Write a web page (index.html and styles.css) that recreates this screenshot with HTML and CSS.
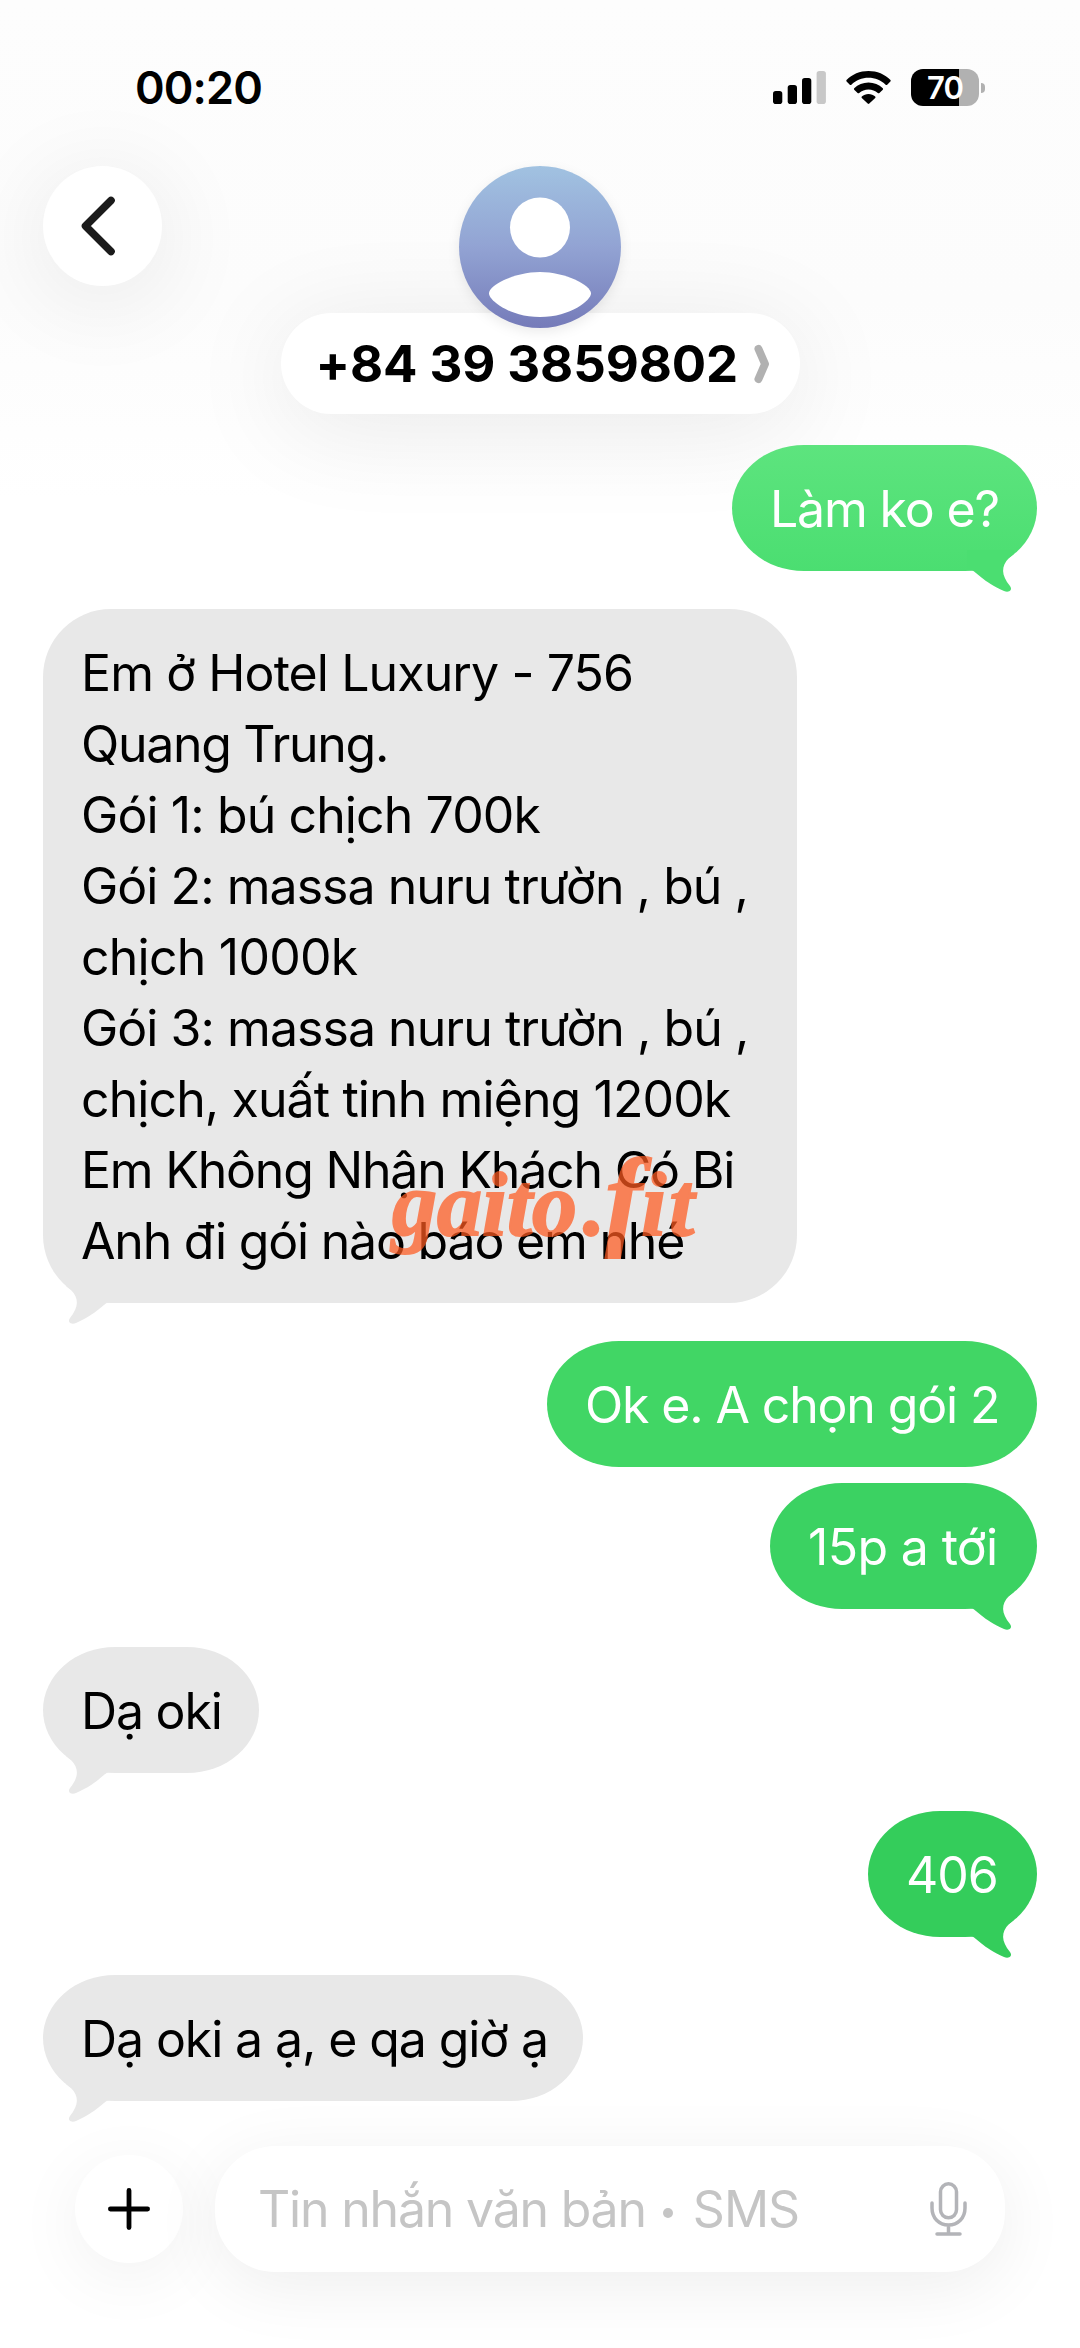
FILE: index.html
```html
<!DOCTYPE html>
<html lang="vi">
<head>
<meta charset="utf-8">
<title>Tin nhắn</title>
<link rel="stylesheet" href="styles.css">
</head>
<body>
<svg class="defs" width="0" height="0" aria-hidden="true">
  <symbol id="tail" viewBox="0 0 48 44"><path fill="currentColor" d="M0 0V20H4C9 21 16 32 37 41C42 43 46 40 43 36C34 25 34 16 42 8L47 4V0Z"/></symbol>
</svg>
<div class="phone">
  <header class="top">
    <div class="status">
      <span class="time">00:20</span>
      <div class="indicators">
        <svg width="53" height="33" viewBox="0 0 53 33"><rect x="0" y="20" width="9.3" height="13" rx="2.8"/><rect x="14.7" y="14" width="9.3" height="19" rx="2.8"/><rect x="29" y="7" width="9.3" height="26" rx="2.8"/><rect x="43.6" y="0" width="9.3" height="33" rx="2.8" fill="#c8c8c8"/></svg>
        <svg width="45" height="33" viewBox="0 0 45 33"><path d="M22.5 0C31 0 39 3.300 44.500 9Q45 9.800 44.400 10.500L41.200 13.800Q40.400 14.300 39.600 13.700C35 9.300 29 6.800 22.500 6.800S10 9.300 5.400 13.700Q4.600 14.300 3.800 13.800L.6 10.500Q0 9.800.5 9C6 3.300 14 0 22.500 0Z"/><path d="M22.500 11.600C28 11.600 33 13.700 36.800 17.200Q37.400 18 36.800 18.700L33.400 22Q32.600 22.600 31.800 22C29.300 19.700 26 18.400 22.500 18.400S15.700 19.700 13.200 22Q12.400 22.600 11.600 22L8.200 18.700Q7.600 18 8.200 17.200C12 13.700 17 11.600 22.500 11.600Z"/><path d="M22.500 22.900C25.100 22.900 27.400 23.800 29.200 25.400Q29.800 26.200 29.200 26.900L23.300 32.600Q22.500 33.200 21.700 32.600L15.800 26.900Q15.200 26.200 15.800 25.400C17.600 23.800 19.900 22.900 22.500 22.900Z"/></svg>
        <div class="battery"><span class="level">70</span><i class="nub"></i></div>
      </div>
    </div>
    <div class="nav">
      <div class="back"><svg width="36" height="60" viewBox="0 0 36 60"><path d="M31 4.500L5.500 30L31 55.500" fill="none" stroke="#1b1b1b" stroke-width="7.600" stroke-linecap="round" stroke-linejoin="round"/></svg></div>
      <div class="contact">
        <svg class="avatar" width="162" height="162" viewBox="0 0 162 162"><defs><linearGradient id="av" x1="0" y1="0" x2="0" y2="1"><stop offset="0" stop-color="#a1c2e1"/><stop offset=".5" stop-color="#92a3d3"/><stop offset="1" stop-color="#757bb9"/></linearGradient></defs><circle cx="81" cy="81" r="81" fill="url(#av)"/><circle cx="81" cy="61.500" r="30" fill="#fff"/><path d="M81 106C106 106 132 119 132 127.500C132 134 112 151 81 151S30 134 30 127.500C30 119 56 106 81 106Z" fill="#fff"/></svg>
        <div class="pill"><span class="number">+84 39 3859802</span><svg width="16" height="40" viewBox="0 0 16 40"><path d="M4.500 5L11 20L4.500 35" fill="none" stroke="#b1b1b1" stroke-width="8" stroke-linecap="round" stroke-linejoin="round"/></svg></div>
      </div>
    </div>
  </header>
  <main class="thread">
    <div class="msg out first"><p>Làm ko e?</p><svg class="tail"><use href="#tail"/></svg></div>
    <div class="msg in long">
      <p class="l1">Em ở Hotel Luxury - 756</p>
      <p class="l2">Quang Trung.</p>
      <p class="l3">Gói 1: bú chịch 700k</p>
      <p class="l4">Gói 2: massa nuru trườn , bú ,</p>
      <p class="l5">chịch 1000k</p>
      <p class="l6">Gói 3: massa nuru trườn , bú ,</p>
      <p class="l7">chịch, xuất tinh miệng 1200k</p>
      <p class="l8">Em Không Nhận Khách Có Bi</p>
      <p class="l9">Anh đi gói nào báo em nhé</p>
      <svg class="tail"><use href="#tail"/></svg>
      <div class="watermark"><span>gaito</span><span class="dot">.</span><span class="fit"><span class="f">f</span>it</span></div>
    </div>
    <div class="msg out second"><p>Ok e. A chọn gói 2</p></div>
    <div class="msg out third"><p>15p a tới</p><svg class="tail"><use href="#tail"/></svg></div>
    <div class="msg in short"><p>Dạ oki</p><svg class="tail"><use href="#tail"/></svg></div>
    <div class="msg out room"><p>406</p><svg class="tail"><use href="#tail"/></svg></div>
    <div class="msg in last"><p>Dạ oki a ạ, e qa giờ ạ</p><svg class="tail"><use href="#tail"/></svg></div>
  </main>
  <footer class="composer">
    <div class="plus"><svg width="42" height="42" viewBox="0 0 42 42"><path d="M21 2.400V39.600M2.400 21H39.600" stroke="#000" stroke-width="4.800" stroke-linecap="round"/></svg></div>
    <div class="field"><span class="hint">Tin nhắn văn bản</span><i class="bullet"></i><span class="hint sms">SMS</span>
      <svg class="mic" width="37" height="54" viewBox="0 0 37 54" fill="none" stroke="#b3b4b8" stroke-width="3.500" stroke-linecap="round"><rect x="10.500" y="1.800" width="16" height="34" rx="8"/><path d="M2 21V26C2 36 9 43 18.500 43S35 36 35 26V21M18.500 43V52M7 52H30"/></svg></div>
  </footer>
</div>
</body>
</html>
```
FILE: styles.css
```css
* { box-sizing: border-box; margin: 0; }
body { background: #fff; font-family: Inter, "Liberation Sans", sans-serif; color: #000; }
.defs { position: absolute; }
.phone { width: 1080px; height: 2348px; overflow: hidden; display: flex; flex-direction: column; background: linear-gradient(#fdfdfd 0, #fcfcfc 300px, #fff 500px); }

/* Status bar and contact header */
.top { flex: none; height: 445px; }
.status { height: 166px; padding: 60px 101px 0 135px; display: flex; justify-content: space-between; align-items: flex-start; }
.time { font-size: 45px; font-weight: 600; line-height: 56px; letter-spacing: -.9px; }
.indicators { display: flex; align-items: center; gap: 20px; height: 55px; }
.battery { position: relative; width: 68px; height: 37px; border-radius: 12px; background: linear-gradient(90deg, #000 0 48px, #b1b1b1 48px); display: flex; align-items: center; justify-content: center; }
.level { color: #fff; font-size: 31px; font-weight: 600; letter-spacing: -1px; line-height: 37px; }
.nub { position: absolute; left: 70px; top: 14px; width: 4px; height: 10px; border-radius: 0 4px 4px 0; background: #b1b1b1; }
.nav { display: grid; grid-template-columns: 120px 1fr 120px; padding: 0 43px; }
.back { width: 119px; height: 120px; border-radius: 50%; background: #fff; display: flex; align-items: center; justify-content: center; padding-right: 9px; box-shadow: 0 12px 90px 10px rgba(0,0,0,.065); }
.contact { display: flex; flex-direction: column; align-items: center; }
.avatar { position: relative; z-index: 1; filter: drop-shadow(0 4px 6px rgba(0,0,0,.08)); }
.pill { width: 519px; height: 101px; margin-top: -15px; border-radius: 51px; background: #fff; display: flex; align-items: center; padding-left: 35px; box-shadow: 0 14px 100px 5px rgba(0,0,0,.08); }
.number { width: 438px; font-size: 51px; font-weight: 700; line-height: 100px; letter-spacing: -.1px; white-space: nowrap; }

/* Conversation */
.thread { flex: none; height: 1701px; display: flex; flex-direction: column; align-items: flex-start; padding: 0 43px; }
.msg { position: relative; flex: none; min-height: 126px; padding: 29px 38px 26px; margin-bottom: 38px; border-radius: 72px / 63px; font-size: 50px; line-height: 71px; letter-spacing: -.9px; }
.msg p { white-space: nowrap; }
.in { background: #e8e8e8; color: #000; }
.out { align-self: flex-end; color: #fff; }
.tail { position: absolute; right: 22px; bottom: -23px; width: 48px; height: 44px; color: #e8e8e8; }
.in .tail { right: auto; left: 22px; transform: scaleX(-1); }
.first { width: 305px; background: linear-gradient(#5de47e, #4bde71); letter-spacing: -1.15px; }
.first .tail { color: #4bde71; }
.long { width: 754px; border-radius: 68px; padding: 28.500px 38px 26px; }
.l2 { letter-spacing: -1.3px; }
.l4, .l6 { letter-spacing: -.96px; }
.l5 { letter-spacing: -.77px; }
.l8, .l9 { letter-spacing: -1.2px; }
.second { width: 490px; margin-bottom: 16px; background: #41d665; letter-spacing: -1.15px; }
.third { width: 267px; background: #3bd262; letter-spacing: -.65px; }
.third .tail { color: #3bd262; }
.short { width: 216px; letter-spacing: -1.2px; }
.room { width: 169px; background: #34cd5b; letter-spacing: -1px; }
.room .tail { color: #34cd5b; }
.last { width: 540px; margin-bottom: 0; letter-spacing: -1.1px; }
.watermark { position: absolute; left: 349px; top: 534px; display: flex; align-items: baseline; font: italic 700 90px/110px "Liberation Serif", serif; letter-spacing: 0; color: #ff5a20; -webkit-text-stroke: 2px #ff5a20; opacity: .72; }
.dot { margin-left: 6px; }
.fit { margin-left: 0; letter-spacing: 3px; }
.f { font-size: 110px; letter-spacing: -1px; }

/* Message composer */
.composer { display: flex; align-items: flex-start; padding: 0 75px; gap: 32px; }
.plus { width: 108px; height: 108px; margin-top: 9px; border-radius: 50%; background: #fff; display: flex; align-items: center; justify-content: center; box-shadow: 0 14px 70px rgba(0,0,0,.06); }
.field { flex: 1; height: 126px; border-radius: 60px; background: #fff; display: flex; align-items: center; padding: 0 38px 0 43px; box-shadow: 0 14px 70px rgba(0,0,0,.07); }
.hint { font-size: 50px; line-height: 126px; color: #c5c5c5; letter-spacing: -1.2px; white-space: nowrap; }
.sms { letter-spacing: -1px; }
.bullet { width: 10px; height: 10px; border-radius: 50%; background: #c5c5c5; margin: 8px 20px 0 17px; }
.mic { margin-left: auto; }
```
